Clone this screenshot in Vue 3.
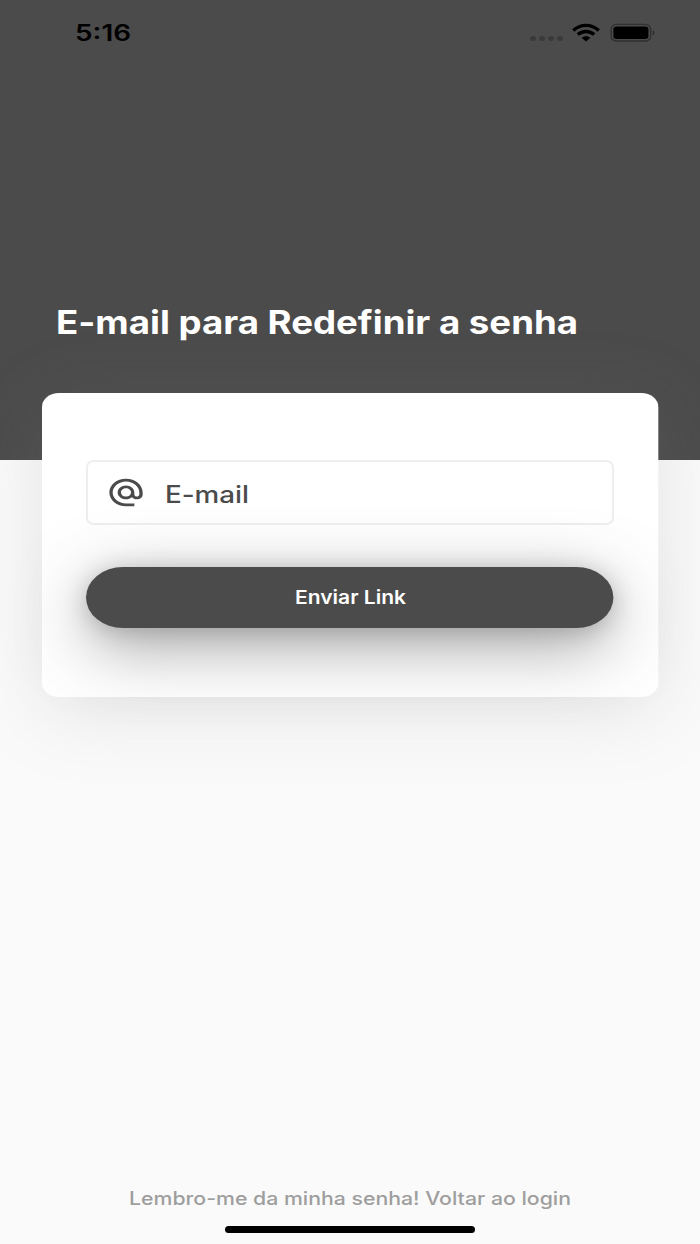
<script setup>
const heading = 'E-mail para Redefinir a senha'
const backLabel = 'Lembro-me da minha senha! Voltar ao login'
</script>

<template>
  <main class="screen">
    <header class="hero">
      <div class="status">
        <svg class="time" width="56" height="24" viewBox="0 0 56 24">
          <text x="0" y="19" textLength="56" lengthAdjust="spacingAndGlyphs">5:16</text>
        </svg>
        <div class="indicators">
          <span class="signal"><i v-for="n in 4" :key="n"></i></span>
          <svg class="wifi" width="28" height="18" viewBox="0 0 28 18">
            <path d="M1.3 6.5C8.4-.3 19.6-.3 26.7 6.5" />
            <path d="M5.8 10.6c4.7-4.2 11.7-4.2 16.4 0" />
            <path class="fill" d="M9.6 13.8c2.4-2.2 6.4-2.2 8.8 0L14 17.5z" />
          </svg>
          <svg class="battery" width="46" height="20" viewBox="0 0 46 20">
            <rect class="shell" x="1.2" y="1.4" width="39.4" height="16.6" rx="5.4" ry="4.6" />
            <rect x="3.4" y="3.5" width="35" height="12.5" rx="3.2" ry="2.7" />
            <path class="cap" d="M42.6 7c2.6 1.2 2.6 4.4 0 5.6z" />
          </svg>
        </div>
      </div>
      <h1 class="title">
        <svg width="522" height="44" viewBox="0 0 522 44">
          <text x="0" y="33.5" textLength="522" lengthAdjust="spacingAndGlyphs">{{ heading }}</text>
        </svg>
      </h1>
    </header>

    <section class="card">
      <div class="field">
        <svg class="at" width="40" height="33" viewBox="0 0 24 24" preserveAspectRatio="none">
          <path d="M12 1.95c-5.52 0-10 4.48-10 10s4.48 10 10 10h5v-2h-5c-4.34 0-8-3.66-8-8s3.66-8 8-8 8 3.66 8 8v1.43c0 .79-.71 1.57-1.5 1.57s-1.5-.78-1.5-1.57v-1.43c0-2.76-2.24-5-5-5s-5 2.24-5 5 2.24 5 5 5c1.38 0 2.64-.56 3.54-1.47.65.89 1.77 1.47 2.96 1.47 1.97 0 3.5-1.6 3.5-3.57v-1.43c0-5.52-4.48-10-10-10zm0 13c-1.66 0-3-1.34-3-3s1.34-3 3-3 3 1.34 3 3-1.34 3-3 3z" />
        </svg>
        <svg class="placeholder" width="84" height="30" viewBox="0 0 84 30">
          <text x="0" y="24" textLength="84" lengthAdjust="spacingAndGlyphs">E-mail</text>
        </svg>
      </div>
      <button class="submit" type="button">
        <svg width="111" height="26" viewBox="0 0 111 26">
          <text x="0" y="20" textLength="111" lengthAdjust="spacingAndGlyphs">Enviar Link</text>
        </svg>
      </button>
    </section>

    <footer class="footer">
      <svg width="442" height="28" viewBox="0 0 442 28">
        <text x="0" y="20.8" textLength="442" lengthAdjust="spacingAndGlyphs">{{ backLabel }}</text>
      </svg>
      <span class="home"></span>
    </footer>
  </main>
</template>

<style>
body {
  margin: 0;
  background: #fafafa;
}
</style>

<style scoped>
.screen {
  display: flex;
  flex-direction: column;
  width: 700px;
  height: 1244px;
  overflow: hidden;
  background: #fafafa;
  font-family: Inter, "Liberation Sans", sans-serif;
}
svg {
  display: block;
  flex: none;
  overflow: visible;
}
.hero {
  box-sizing: border-box;
  flex: none;
  height: 460px;
  padding: 22px 44px 0 75px;
  background: #4b4b4b;
}
.status {
  display: flex;
  justify-content: space-between;
  height: 24px;
}
.time text {
  font-size: 22.5px;
  font-weight: 600;
}
.indicators {
  display: flex;
}
.signal {
  display: flex;
  gap: 3px;
  margin: 14px 9px 0 0;
}
.signal i {
  width: 5.9px;
  height: 5px;
  border-radius: 50%;
  background: #3a3a3a;
}
.wifi {
  margin: 1.5px 10.3px 0 0;
  fill: none;
  stroke: #000;
  stroke-width: 3.4;
}
.wifi .fill {
  fill: #000;
  stroke: none;
}
.battery {
  margin-top: .8px;
}
.battery .shell {
  fill: none;
  stroke: #303030;
  stroke-width: 1.4;
}
.battery .cap {
  fill: #303030;
}
.title {
  margin: 254px 0 0 -19px;
}
.title text {
  fill: #fff;
  font-size: 32px;
  font-weight: 700;
}
.card {
  position: relative;
  z-index: 0;
  box-sizing: border-box;
  flex: none;
  width: 616px;
  height: 303.5px;
  margin: -67px 42px 0;
  padding: 67px 44px 0;
}
.card::before,
.submit::before {
  content: "";
  position: absolute;
  z-index: -1;
  top: 0;
  bottom: 0;
  left: 50%;
  width: 82.1%;
  transform: translateX(-50%) scaleX(1.218);
}
.card::before {
  border-radius: 14px;
  background: #fff;
  box-shadow: 0 13px 70px rgba(135, 135, 135, .19);
}
.field {
  box-sizing: border-box;
  display: flex;
  height: 65px;
  padding: 14px 17.5px;
  border: 2px solid #eeeef1;
  border-radius: 8px / 7px;
}
.at {
  fill: #4b4b4b;
}
.placeholder {
  margin: 3px 0 0 19px;
}
.placeholder text {
  fill: #4b4b4b;
  font-size: 23.8px;
  font-weight: 550;
}
.submit {
  position: relative;
  z-index: 0;
  display: flex;
  justify-content: center;
  width: 528px;
  height: 60.5px;
  margin-top: 42px;
  padding: 17px 0 0;
  border: 0;
  background: none;
  font-family: inherit;
}
.submit::before {
  border-radius: 31px;
  background: #4b4b4b;
  box-shadow:
    0 4px 20px rgba(75, 75, 75, .3),
    0 18px 60px rgba(75, 75, 75, .5);
}
.submit text {
  fill: #fff;
  font-size: 18.6px;
  font-weight: 600;
}
.footer {
  display: flex;
  flex-direction: column;
  align-items: center;
  margin-top: auto;
  padding-bottom: 11px;
}
.footer text {
  fill: #9e9e9e;
  font-size: 18.2px;
  font-weight: 550;
}
.home {
  width: 250px;
  height: 7px;
  margin-top: 14px;
  border-radius: 4px;
  background: #000;
}
</style>
